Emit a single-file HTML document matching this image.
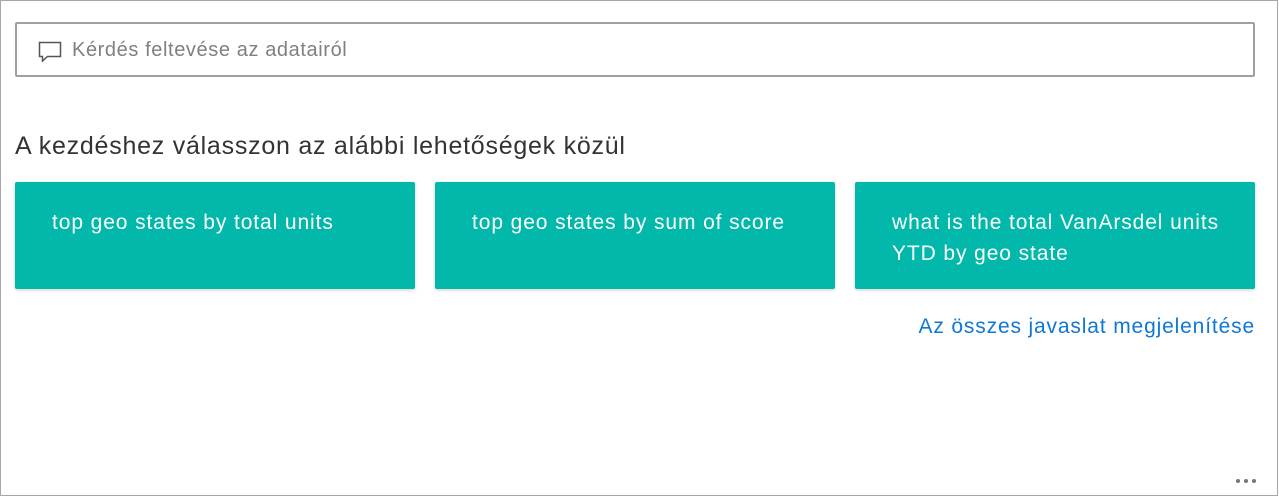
<!DOCTYPE html>
<html><head><meta charset="utf-8"><style>
*{margin:0;padding:0;box-sizing:border-box}
body{width:1279px;height:497px;background:#fff;font-family:"Liberation Sans",sans-serif;position:relative;overflow:hidden}
.frame{position:absolute;left:0;top:0;width:1278px;height:496px;border:1px solid #a6a6a6}
.input{position:absolute;left:15px;top:22px;width:1240px;height:55px;border:2px solid #a0a0a0;border-radius:2px}
.input span{position:absolute;left:55px;top:15px;font-size:20px;letter-spacing:0.6px;color:#808080}
.input svg{position:absolute;left:21px;top:17px}
h1{position:absolute;left:15px;top:132px;font-size:25px;letter-spacing:0.75px;font-weight:normal;color:#333}
.card{position:absolute;top:182px;width:400px;height:107px;background:#01b8aa;border-radius:2px;box-shadow:0 1px 3px rgba(0,0,0,.2);color:#fff;font-size:21px;letter-spacing:0.9px;line-height:31px;padding:25px 20px 0 37px}
.link{position:absolute;right:24px;top:315px;font-size:21px;letter-spacing:0.85px;color:#0f78d4}
.dots{position:absolute;left:1236px;top:479px;display:flex;gap:4px}
.dots i{display:block;width:4px;height:4px;border-radius:2px;background:#777}
</style></head><body>
<div class="frame"></div>
<div class="input"><svg width="24" height="22" viewBox="0 0 24 22"><path d="M1.5 1.5h21v14h-13l-5 4.5v-4.5h-3z" fill="none" stroke="#555" stroke-width="1.5"/></svg><span>Kérdés feltevése az adatairól</span></div>
<h1>A kezdéshez válasszon az alábbi lehetőségek közül</h1>
<div class="card" style="left:15px">top geo states by total units</div>
<div class="card" style="left:435px">top geo states by sum of score</div>
<div class="card" style="left:855px">what is the total VanArsdel units<br>YTD by geo state</div>
<div class="link">Az összes javaslat megjelenítése</div>
<div class="dots"><i></i><i></i><i></i></div>
</body></html>
